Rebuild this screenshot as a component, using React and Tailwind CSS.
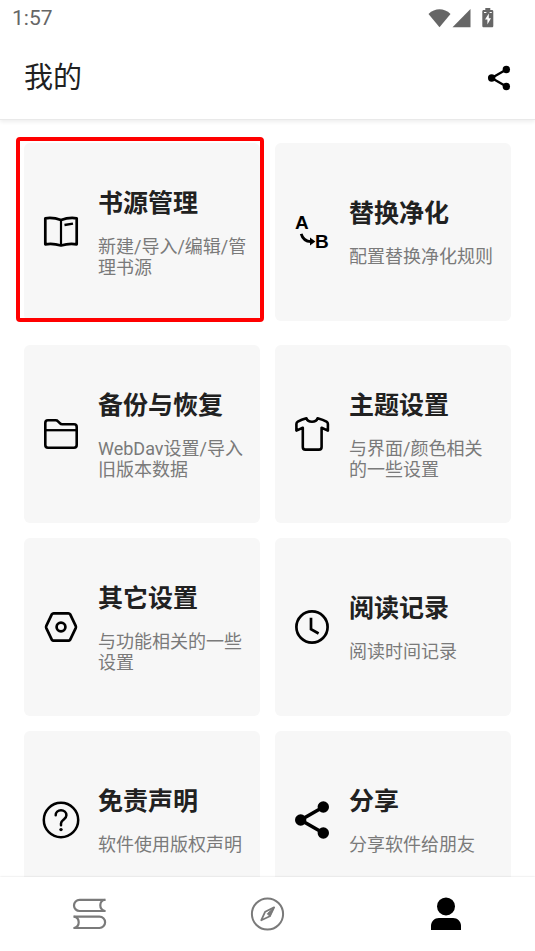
import React, { useState } from 'react'

const ink = { fill: 'none', stroke: 'currentColor', strokeLinejoin: 'round' }

function BookIcon() {
  return (
    <svg viewBox="0 0 40 40" className="w-10 h-10" {...ink} strokeWidth="2.7">
      <path d="M4.3 6.3C8.5 5.7 14 5.8 20 8C26 5.8 31.5 5.7 35.7 6.3V32.3C30.5 31.5 25 32 20 33.5C15 32 9.5 31.5 4.3 32.3Z" />
      <path d="M20 8V33.5" strokeWidth="2.2" />
      <path d="M23.5 13L32 11.6" strokeWidth="2.4" />
    </svg>
  )
}

function ReplaceIcon() {
  return (
    <svg viewBox="0 0 40 40" className="w-10 h-10" fill="currentColor" aria-hidden="true">
      <text x="3" y="17" className="text-[19px] font-bold font-['Liberation_Sans',sans-serif]">A</text>
      <text x="23" y="36" className="text-[19px] font-bold font-['Liberation_Sans',sans-serif]">B</text>
      <path d="M9.2 21.8C10.5 26.5 13.5 29.4 19 29.6" fill="none" stroke="currentColor" strokeWidth="2.8" />
      <path d="M18 25.6L23.4 29.5L18 33.4Z" />
    </svg>
  )
}

function FolderIcon() {
  return (
    <svg viewBox="0 0 40 40" className="w-10 h-10" {...ink} strokeWidth="2.6">
      <path d="M7 6.3H14.6C15.6 6.3 16.4 6.6 17 7.3L18.8 9.2C19.4 9.9 20.2 10.3 21.2 10.3H33C34.5 10.3 35.7 11.5 35.7 13V31C35.7 32.5 34.5 33.7 33 33.7H7C5.5 33.7 4.3 32.5 4.3 31V9C4.3 7.5 5.5 6.3 7 6.3Z" />
      <path d="M4.3 16.2H35.7" strokeWidth="2.3" />
    </svg>
  )
}

function ShirtIcon() {
  return (
    <svg viewBox="0 0 40 40" className="w-10 h-10" {...ink} strokeWidth="2.6">
      <path d="M14.4 4.3C15.2 6.6 17.4 7.8 20 7.8C22.6 7.8 24.8 6.6 25.6 4.3C29 5.2 32 6.2 34.5 7.6C35.5 8.2 35.9 8.9 35.9 10V16.6L29.6 13.8V33C29.6 34.6 28.6 35.6 27 35.6H13.4C11.8 35.6 10.8 34.6 10.8 33V13.8L4.4 16.6V10C4.4 8.9 4.8 8.2 5.8 7.6C8.3 6.2 11 5.2 14.4 4.3Z" />
    </svg>
  )
}

function HexIcon() {
  return (
    <svg viewBox="0 0 40 40" className="w-10 h-10" {...ink} strokeWidth="2.7">
      <path d="M12.6 6.3H27.4C28.2 6.3 28.7 6.6 29.1 7.2L34.7 18.9C35 19.6 35 20.4 34.7 21.1L29.1 32.8C28.7 33.4 28.2 33.7 27.4 33.7H12.6C11.8 33.7 11.3 33.4 10.9 32.8L5.3 21.1C5 20.4 5 19.6 5.3 18.9L10.9 7.2C11.3 6.6 11.8 6.3 12.6 6.3Z" />
      <circle cx="20" cy="20" r="4.4" />
    </svg>
  )
}

function ClockIcon() {
  return (
    <svg viewBox="0 0 40 40" className="w-10 h-10" {...ink} strokeLinejoin="miter" strokeWidth="2.7">
      <circle cx="20" cy="20" r="15.6" />
      <path d="M19 10.8V22.3L26.6 26.5" />
    </svg>
  )
}

function HelpIcon() {
  return (
    <svg viewBox="0 0 40 40" className="w-10 h-10" {...ink} strokeLinecap="round" strokeWidth="2.5">
      <circle cx="20" cy="20" r="17.2" />
      <path d="M14.7 15.3C14.7 12.3 17 10.3 20 10.3C23 10.3 25.4 12.3 25.4 15.2C25.4 17 24.5 18 23 19.3C21 20.9 20 21.8 20 23.5V25.2" />
      <circle cx="20" cy="29.6" r="1.7" fill="currentColor" stroke="none" />
    </svg>
  )
}

function ShareIcon({ className = 'w-10 h-10' }) {
  return (
    <svg viewBox="0 0 40 40" className={className} fill="currentColor">
      <path d="M31.3 7L8.7 20L31.3 33" fill="none" stroke="currentColor" strokeWidth="3.6" />
      <circle cx="31.3" cy="7" r="5.7" />
      <circle cx="8.7" cy="20" r="5.7" />
      <circle cx="31.3" cy="33" r="5.7" />
    </svg>
  )
}

function ShelfIcon() {
  return (
    <svg viewBox="0 0 36 36" className="w-9 h-9" {...ink} strokeWidth="2.2">
      <path d="M34.6 3.8H8.6A5.6 5.6 0 0 0 8.6 15H34.6" />
      <path d="M33.8 3.8C27.8 5.2 27.8 13.5 33.8 15" />
      <path d="M2.4 20.6H28.4A5.7 5.7 0 0 1 28.4 32H2.4" />
      <path d="M3.2 20.6C9.2 22 9.2 30.5 3.2 32" />
    </svg>
  )
}

function CompassIcon() {
  return (
    <svg viewBox="0 0 36 36" className="w-9 h-9" {...ink} strokeWidth="2">
      <circle cx="18.5" cy="18" r="15.6" />
      <path d="M25.1 11.4L20.8 20.3L12.3 24.2L16.2 15.7Z" strokeWidth="1.8" />
      <path d="M25.1 11.4L20.8 20.3L18.3 17.8Z" fill="currentColor" strokeWidth="1" />
    </svg>
  )
}

function PersonIcon() {
  return (
    <svg viewBox="0 0 36 36" className="w-9 h-9" fill="currentColor">
      <circle cx="18" cy="10.4" r="9" />
      <path d="M3 34V30C3 25.5 6.5 22 11 22H25C29.5 22 33 25.5 33 30V34Z" />
    </svg>
  )
}

const cards = [
  { title: '书源管理', desc: '新建/导入/编辑/管理书源', Icon: BookIcon, marked: true },
  { title: '替换净化', desc: '配置替换净化规则', Icon: ReplaceIcon },
  { title: '备份与恢复', desc: 'WebDav设置/导入旧版本数据', Icon: FolderIcon },
  { title: '主题设置', desc: '与界面/颜色相关的一些设置', Icon: ShirtIcon },
  { title: '其它设置', desc: '与功能相关的一些设置', Icon: HexIcon },
  { title: '阅读记录', desc: '阅读时间记录', Icon: ClockIcon },
  { title: '免责声明', desc: '软件使用版权声明', Icon: HelpIcon },
  { title: '分享', desc: '分享软件给朋友', Icon: ShareIcon },
]

const tabs = [
  { id: 'shelf', label: '书架', Icon: ShelfIcon },
  { id: 'explore', label: '发现', Icon: CompassIcon },
  { id: 'mine', label: '我的', Icon: PersonIcon },
]

function Card({ title, desc, Icon, marked }) {
  return (
    <button type="button" className="relative flex items-center h-[178px] pr-3 rounded-md bg-[#f7f7f7] text-left">
      <span className="w-[74px] flex-shrink-0 flex justify-center text-black">
        <Icon />
      </span>
      <span className="flex-1 flex flex-col gap-4 pt-px">
        <span className="text-[25px] leading-8 font-bold text-[#212121]">{title}</span>
        <span className="text-[18px] leading-[21px] text-[#7a7a7a] break-all">{desc}</span>
      </span>
      {marked && (
        <span className="absolute -left-2 -right-1 -top-1.5 -bottom-px border-4 border-[#ff0000] rounded-sm" />
      )}
    </button>
  )
}

function StatusBar() {
  return (
    <div className="flex items-center justify-between h-9 pl-3 pr-10 text-[#666666]">
      <span className="text-[21px] leading-[26px] font-['Roboto',sans-serif]">1:57</span>
      <svg viewBox="0 0 68 22" className="w-[68px] h-[22px]" fill="currentColor">
        <path d="M1.5 7C8 0.8 17 0.8 23.5 7L12.5 20.2Z" />
        <path d="M43.5 2V20.2H25.5Z" />
        <path d="M58.3 1H63.3V3H64.8C65.8 3 66.3 3.5 66.3 4.5V18.7C66.3 19.7 65.8 20.2 64.8 20.2H56.8C55.8 20.2 55.3 19.7 55.3 18.7V4.5C55.3 3.5 55.8 3 56.8 3H58.3Z" />
        <path d="M61.8 6.5L58 12.4H60.4V17.5L64 11.2H61.8Z" fill="#ffffff" />
        <path d="M57 5H59.4V6H57ZM62.6 5H64.8V6H62.6Z" fill="#ffffff" />
      </svg>
    </div>
  )
}

export default function App() {
  const [active, setActive] = useState('mine')

  return (
    <div className="h-screen flex flex-col bg-white font-['Roboto','Noto_Sans_CJK_SC',sans-serif]">
      <header className="relative z-10 flex-shrink-0 bg-white border-b border-[#e9e9e9] shadow-[0_2px_4px_rgba(0,0,0,0.07)]">
        <StatusBar />
        <div className="flex items-center justify-between h-[83px] pl-6 pr-[23px]">
          <h1 className="text-[29px] leading-10 text-[#212121]">我的</h1>
          <button type="button" aria-label="分享" className="text-black">
            <ShareIcon className="w-[26px] h-[26px]" />
          </button>
        </div>
      </header>

      <main className="flex-1 min-h-0 overflow-hidden px-6 pt-[23px]">
        <div className="grid grid-cols-2 gap-x-[15px] mb-6">
          {cards.slice(0, 2).map(c => <Card key={c.title} {...c} />)}
        </div>
        <div className="grid grid-cols-2 gap-[15px]">
          {cards.slice(2).map(c => <Card key={c.title} {...c} />)}
        </div>
      </main>

      <nav className="relative z-10 flex-shrink-0 grid grid-cols-3 h-[74px] bg-white shadow-[0_0_2px_rgba(0,0,0,0.15)]">
        {tabs.map(({ id, label, Icon }) => (
          <button
            key={id}
            type="button"
            aria-label={label}
            onClick={() => setActive(id)}
            className={`flex items-center justify-center ${active === id ? 'text-black' : 'text-[#7a7a7a]'}`}
          >
            <Icon />
          </button>
        ))}
      </nav>
    </div>
  )
}
